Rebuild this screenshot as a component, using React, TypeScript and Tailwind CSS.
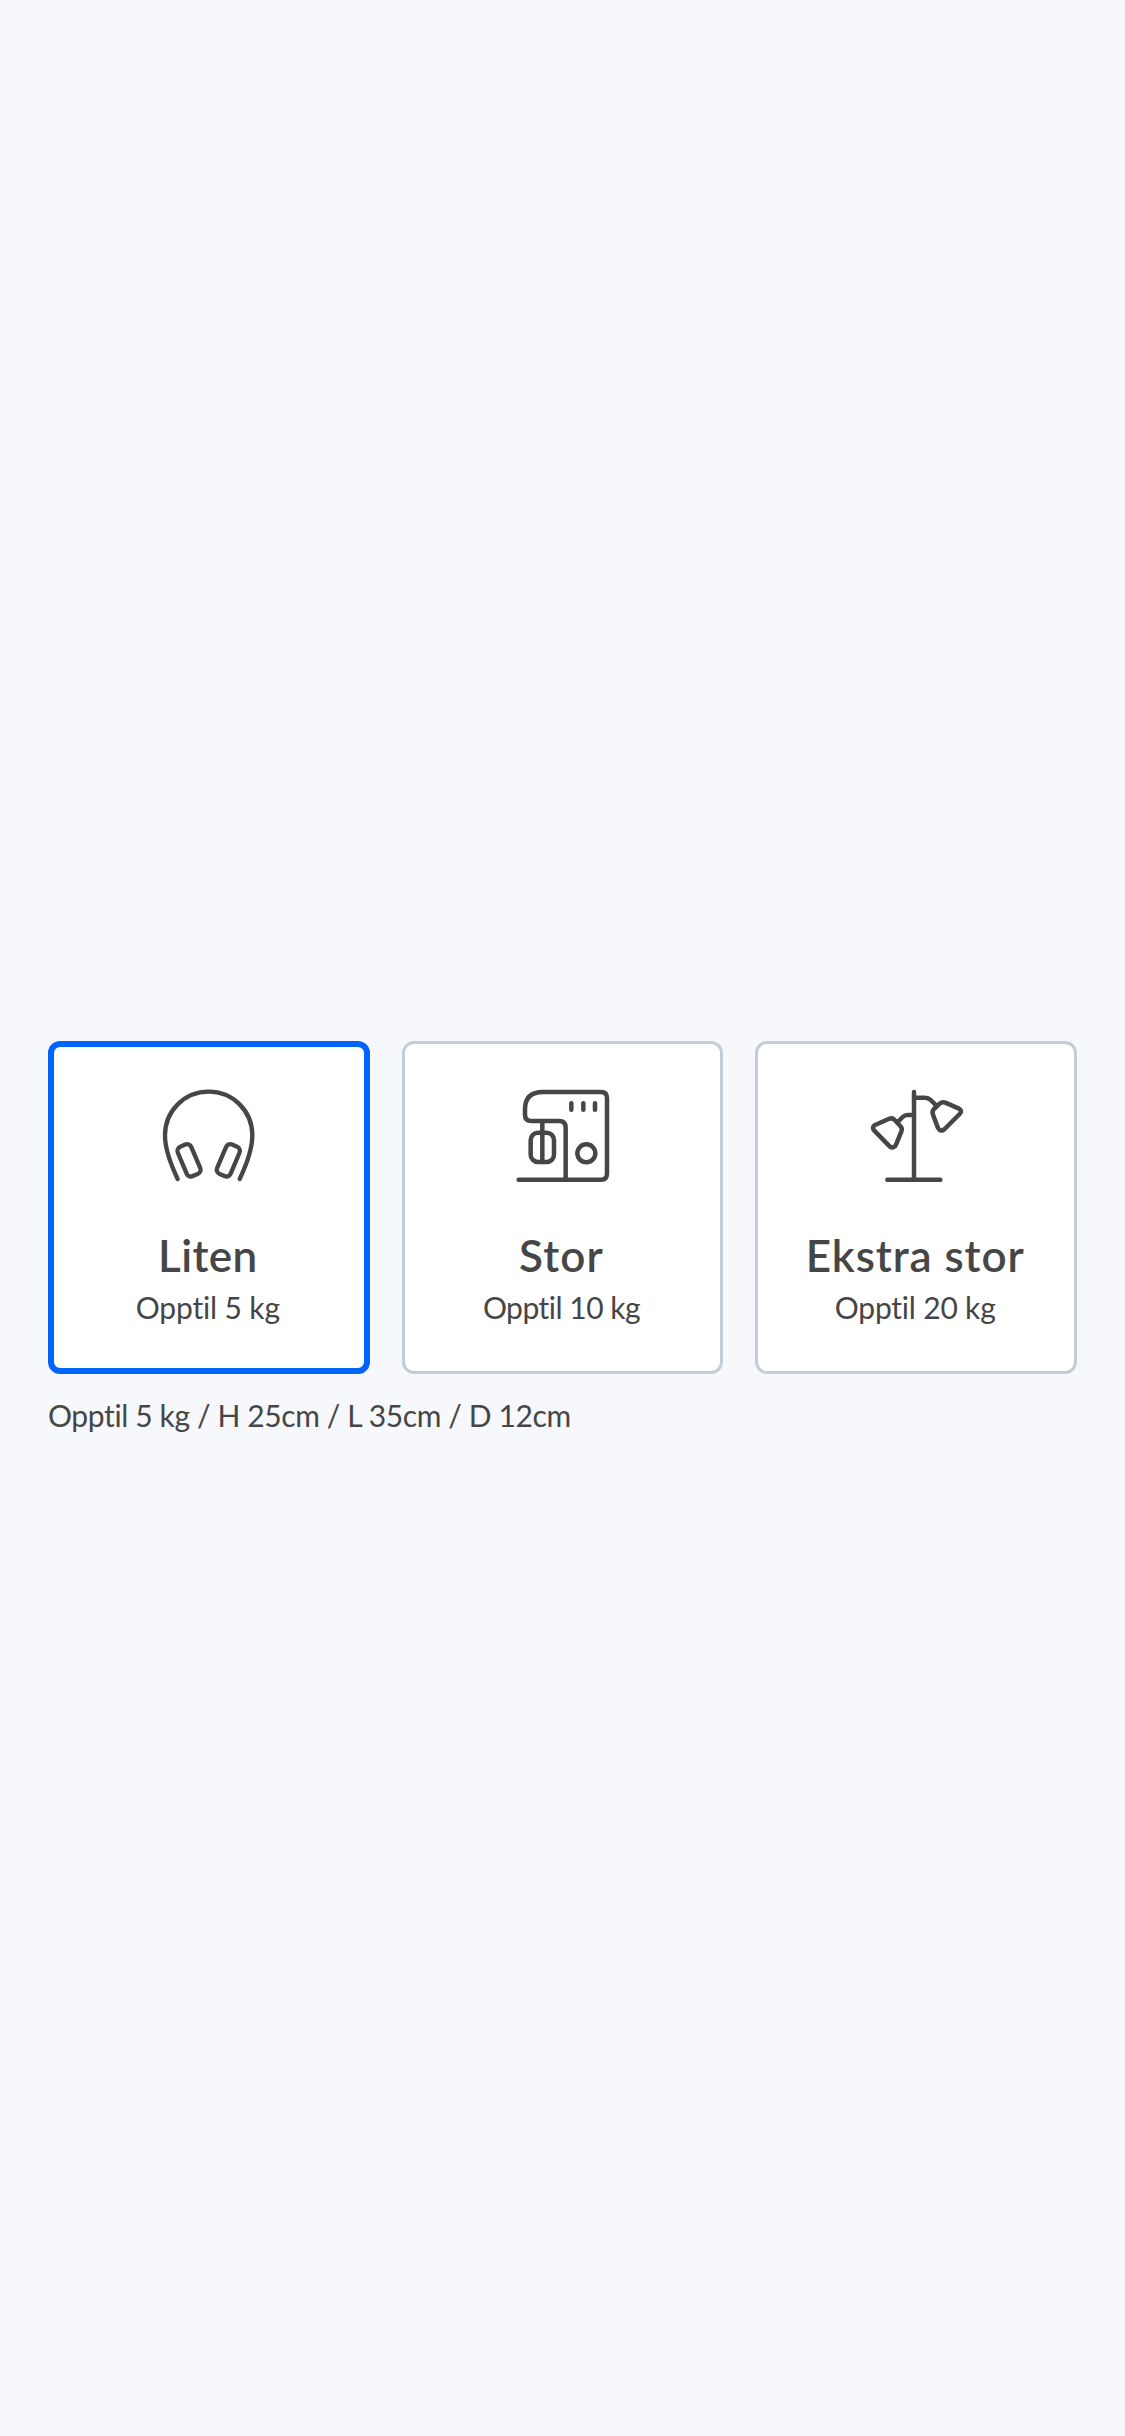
import type { ReactNode } from "react";

function Headphones() {
  return (
    <svg viewBox="27 15 300 300" className="size-[100px]" fill="none" stroke="currentColor" strokeWidth="13" strokeLinecap="round" strokeLinejoin="round">
      <path d="M83 297C61 251 45 207 45 166C45 93 103 35 176 35C249 35 307 93 307 166C307 207 291 251 269 297" />
      <rect x="-22" y="-48" width="44" height="96" rx="14" transform="translate(117 241) rotate(-23)" />
      <rect x="-22" y="-48" width="44" height="96" rx="14" transform="translate(235 241) rotate(23)" />
    </svg>
  );
}

function Mixer() {
  return (
    <svg viewBox="21 15 300 300" className="size-[100px]" fill="none" stroke="currentColor" strokeWidth="13.5" strokeLinecap="round" strokeLinejoin="round">
      <path d="M41 299H288Q306 299 306 281V54Q306 36 288 36H114Q60 36 60 88V104Q60 123 79 123H162Q182 123 182 143V299" />
      <path d="M112 123V246M199 70V89M235 70V89M270 70V89" />
      <rect x="77" y="158" width="70" height="88" rx="22" />
      <circle cx="244" cy="220" r="27" />
    </svg>
  );
}

function Lamp() {
  return (
    <svg viewBox="33 15 300 300" className="size-[100px]" fill="none" stroke="currentColor" strokeWidth="13.5" strokeLinecap="round" strokeLinejoin="round">
      <path d="M177 36V299M97 299H256" />
      <path d="M177 53H210Q220 53 227 60L244 77M177 105H158Q149 105 143 111L127 127" />
      <path d="M60 135L101 117Q112 112 119 120L136 138Q143 145 139 155L123 194Q116 208 104 199L58 152Q49 142 60 135Z" />
      <path d="M271 68L312 86Q323 92 314 102L269 147Q257 158 249 144L234 104Q230 94 237 87L254 71Q262 64 271 68Z" />
    </svg>
  );
}

type CardProps = { title: string; weight: string; selected?: boolean; titleClass: string; weightClass: string; children: ReactNode };

function SizeCard({ title, weight, selected, titleClass, weightClass, children }: CardProps) {
  return (
    <button
      className={`flex h-[333px] min-w-0 flex-col items-center rounded-xl bg-white ${
        selected ? "border-6 border-[#0063fb] pt-[38px]" : "border-3 border-[#c3ccd9] pt-[41px]"
      }`}
    >
      {children}
      <span className={`mt-[42px] pr-[2px] text-[44px] leading-[56px] font-semibold whitespace-nowrap ${titleClass}`}>{title}</span>
      <span className={`mt-px pr-[2px] text-[30px] leading-[46px] whitespace-nowrap ${weightClass}`}>{weight}</span>
    </button>
  );
}

export default function App() {
  return (
    <main className="h-[2436px] w-full bg-[#f6f8fc] px-12 pt-[1041px] font-['Lato',sans-serif] text-[#464646] [font-variant-ligatures:none]">
      <div className="grid grid-cols-3 gap-8">
        <SizeCard title="Liten" weight="Opptil 5 kg" titleClass="tracking-[0.4px]" weightClass="tracking-[-0.15px]" selected>
          <Headphones />
        </SizeCard>
        <SizeCard title="Stor" weight="Opptil 10 kg" titleClass="tracking-[1.2px]" weightClass="tracking-[-0.5px]">
          <Mixer />
        </SizeCard>
        <SizeCard title="Ekstra stor" weight="Opptil 20 kg" titleClass="tracking-[0.9px]" weightClass="tracking-[-0.2px]">
          <Lamp />
        </SizeCard>
      </div>
      <p className="mt-[19px] text-[30px] leading-[44px] tracking-[-0.38px] whitespace-nowrap">Opptil 5 kg / H 25cm / L 35cm / D 12cm</p>
    </main>
  );
}
